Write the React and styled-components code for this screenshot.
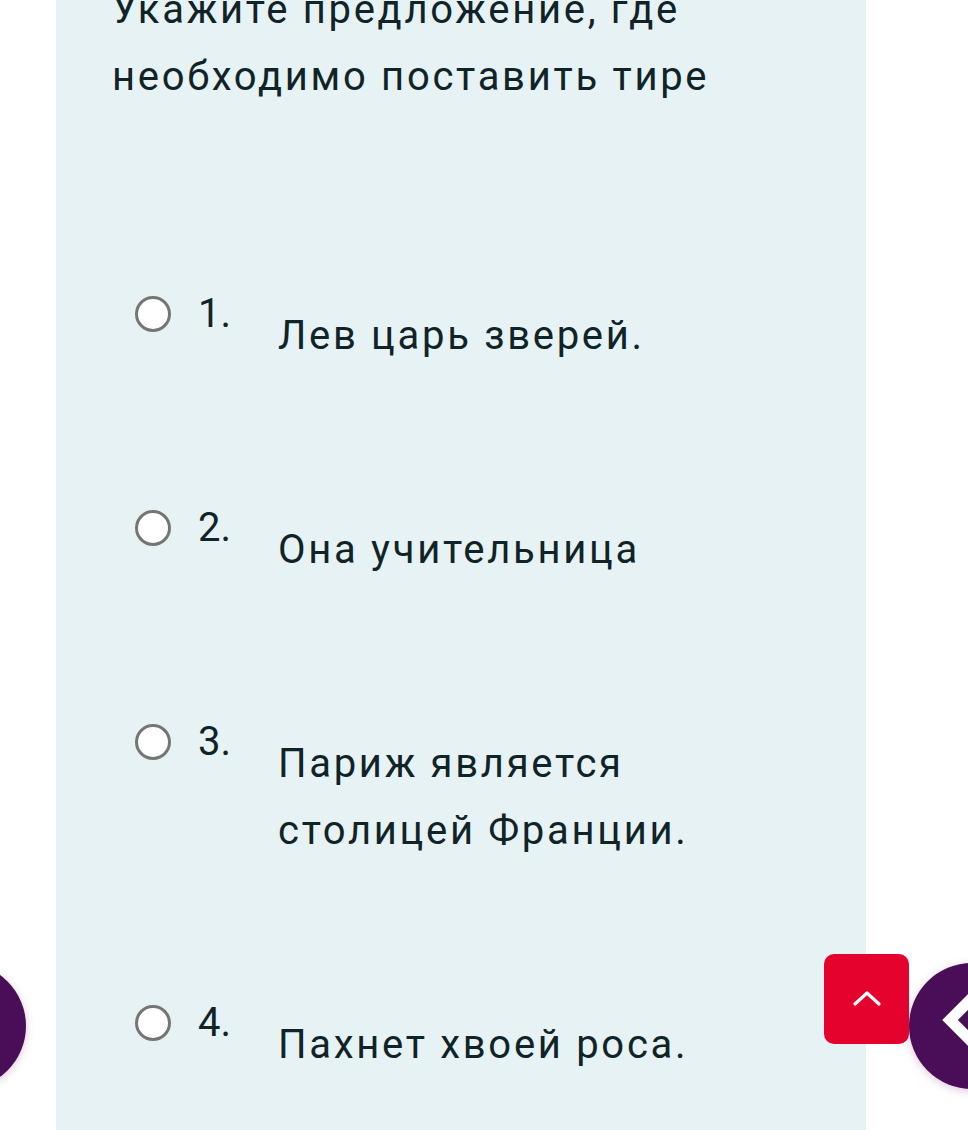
import React from 'react'
import styled, { createGlobalStyle } from 'styled-components'

const options = [
  'Лев царь зверей.',
  'Она учительница',
  'Париж является столицей Франции.',
  'Пахнет хвоей роса.',
]

function App() {
  return (
    <>
      <Global />
      <Page>
        <Panel>
          <Title>Укажите предложение, где необходимо поставить тире</Title>
          <List>
            {options.map((text, i) => (
              <Option key={i}>
                <Radio type="radio" name="answer" />
                <Number>{i + 1}.</Number>
                <Text>{text}</Text>
              </Option>
            ))}
          </List>
        </Panel>
      </Page>
      <ScrollTop aria-label="Наверх">
        <svg width="30" height="18" viewBox="0 0 30 18">
          <polyline points="3,15 15,4 27,15" fill="none" stroke="#fff" strokeWidth="3.2" strokeLinecap="round" strokeLinejoin="round" />
        </svg>
      </ScrollTop>
      <Bubble side="left" />
      <Bubble side="right">
        <svg width="126" height="126" viewBox="0 0 126 126">
          <polyline points="66,32 41,57 66,82" fill="none" stroke="#fff" strokeWidth="11" strokeLinejoin="miter" />
        </svg>
      </Bubble>
    </>
  )
}

export default App

const Global = createGlobalStyle`
  html, body {
    margin: 0;
    padding: 0;
    background: #fff;
    overflow: hidden;
  }
  body {
    font-family: Roboto, "Noto Sans", sans-serif;
    color: #102428;
  }
`

const Page = styled.div`
  height: 1130px;
  display: flex;
  overflow: hidden;
`

const Panel = styled.div`
  margin-left: 56px;
  width: 810px;
  background: #e7f2f5;
  padding-left: 56px;
  box-sizing: border-box;
`

const Title = styled.h1`
  margin: -24px 0 0;
  font-size: 40px;
  font-weight: 400;
  line-height: 67px;
  letter-spacing: 2.7px;
  width: 680px;
`

const List = styled.div`
  margin-top: 186px;
  padding-left: 23px;
  display: flex;
  flex-direction: column;
  gap: 141px;
`

const Option = styled.label`
  display: flex;
  align-items: flex-start;
  cursor: pointer;
`

const Radio = styled.input`
  appearance: none;
  margin: 0;
  flex: none;
  width: 36px;
  height: 36px;
  border-radius: 50%;
  border: 3px solid #757575;
  background: #fff;
  box-sizing: border-box;
`

const Number = styled.span`
  flex: none;
  width: 80px;
  margin-left: 27px;
  font-size: 40px;
  line-height: 36px;
`

const Text = styled.span`
  margin-top: 6px;
  font-size: 40px;
  line-height: 67px;
  letter-spacing: 2.7px;
  max-width: 450px;
`

const ScrollTop = styled.button`
  position: fixed;
  left: 824px;
  top: 954px;
  width: 85px;
  height: 90px;
  border: none;
  border-radius: 10px;
  background: #e5032d;
  display: flex;
  align-items: center;
  justify-content: center;
  padding: 0 0 2px;
  cursor: pointer;
`

const Bubble = styled.div`
  position: fixed;
  top: 963px;
  left: ${p => (p.side === 'left' ? '-100px' : '909px')};
  width: 126px;
  height: 126px;
  border-radius: 50%;
  background: #4a0e58;
  box-shadow: 0 2px 8px rgba(120, 40, 120, 0.25);
  overflow: hidden;
  svg {
    display: block;
  }
`
